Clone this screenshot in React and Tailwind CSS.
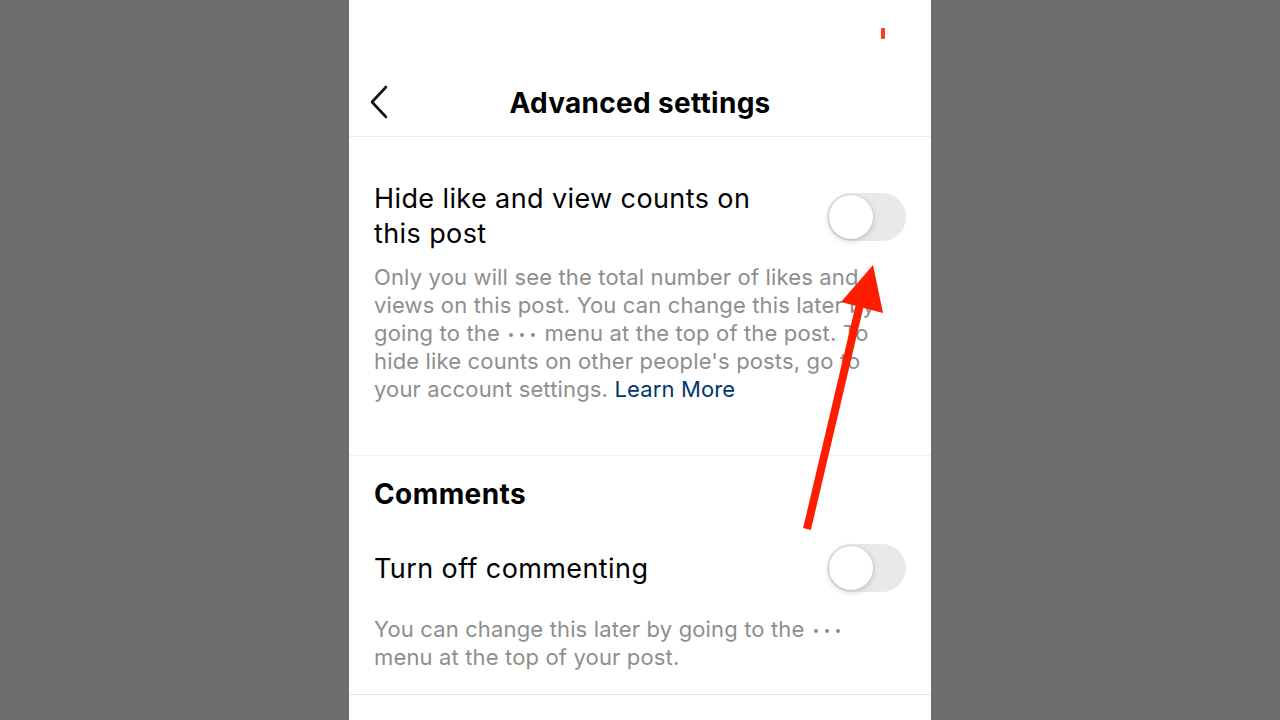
import React from "react";

function Toggle() {
  return (
    <div className="relative h-[48px] w-[79px] shrink-0 rounded-full bg-[#e9e9ea]">
      <div className="absolute left-[2px] top-[2px] h-[44px] w-[44px] rounded-full bg-white shadow-[0_2px_6px_rgba(0,0,0,0.18),0_0_0_1px_rgba(0,0,0,0.04)]" />
    </div>
  );
}

// "more" menu glyph shown inline in the help text
function Dots() {
  return (
    <span className="mx-[3px] inline-flex items-center gap-[7px] align-middle">
      <span className="h-[4px] w-[4px] rounded-full bg-[#8e8e8e]" />
      <span className="h-[4px] w-[4px] rounded-full bg-[#8e8e8e]" />
      <span className="h-[4px] w-[4px] rounded-full bg-[#8e8e8e]" />
    </span>
  );
}

export default function App() {
  return (
    <div
      className="flex h-[720px] w-[1280px] justify-center overflow-hidden bg-[#6e6e6e]"
      style={{ fontFamily: "Inter, 'Noto Sans', sans-serif" }}
    >
      <div className="relative flex w-[582px] flex-col bg-white">
        {/* status bar area */}
        <div className="relative h-[70px]">
          <div className="absolute left-[532px] top-[28px] h-[11px] w-[4px] rounded-[1px] bg-[#ff3b30]" />
        </div>

        {/* header */}
        <div className="relative flex h-[67px] items-center justify-center border-b border-[#ececec]">
          <svg
            className="absolute left-[19px] top-[15px]"
            width="22"
            height="34"
            viewBox="0 0 22 34"
            fill="none"
          >
            <path d="M18 2 L4 17 L18 32" stroke="#111" strokeWidth="2.6" strokeLinecap="round" strokeLinejoin="round" />
          </svg>
          <h1 className="text-[28px] font-bold tracking-[0.3px] text-black">Advanced settings</h1>
        </div>

        {/* like and view counts */}
        <div className="border-b border-[#f0f0f0] px-[25px] pb-[52px] pt-[44px]">
          <div className="flex items-start justify-between">
            <div className="w-[410px] text-[27px] leading-[35px] tracking-[0.4px] text-black">
              Hide like and view counts on this post
            </div>
            <div className="mt-[12px]">
              <Toggle />
            </div>
          </div>
          <p className="mt-[12px] w-[508px] text-[22px] leading-[28px] tracking-[0.15px] text-[#8e8e8e]">
            Only you will see the total number of likes and views on this post. You can change this later by going to the <Dots /> menu at the top of the post. To hide like counts on other people's posts, go to your account settings.{" "}
            <span className="text-[#00376b]">Learn More</span>
          </p>
        </div>

        {/* comments */}
        <div className="border-b border-[#e4e4e4] px-[25px] pb-[23px] pt-[21px]">
          <h2 className="text-[28px] font-bold leading-[35px] tracking-[0.4px] text-black">Comments</h2>
          <div className="mt-[32px] flex items-center justify-between">
            <div className="text-[27px] leading-[35px] tracking-[0.4px] text-black">Turn off commenting</div>
            <Toggle />
          </div>
          <p className="mt-[23px] w-[480px] text-[22px] leading-[28px] tracking-[0.15px] text-[#8e8e8e]">
            You can change this later by going to the <Dots /> menu at the top of your post.
          </p>
        </div>

        {/* annotation arrow */}
        <svg
          className="pointer-events-none absolute left-0 top-0"
          width="582"
          height="720"
          viewBox="0 0 582 720"
        >
          <line x1="458" y1="529" x2="512" y2="300" stroke="#ff1d00" strokeWidth="8" />
          <polygon points="524,265 492,302 534,313" fill="#ff1d00" />
        </svg>
      </div>
    </div>
  );
}
